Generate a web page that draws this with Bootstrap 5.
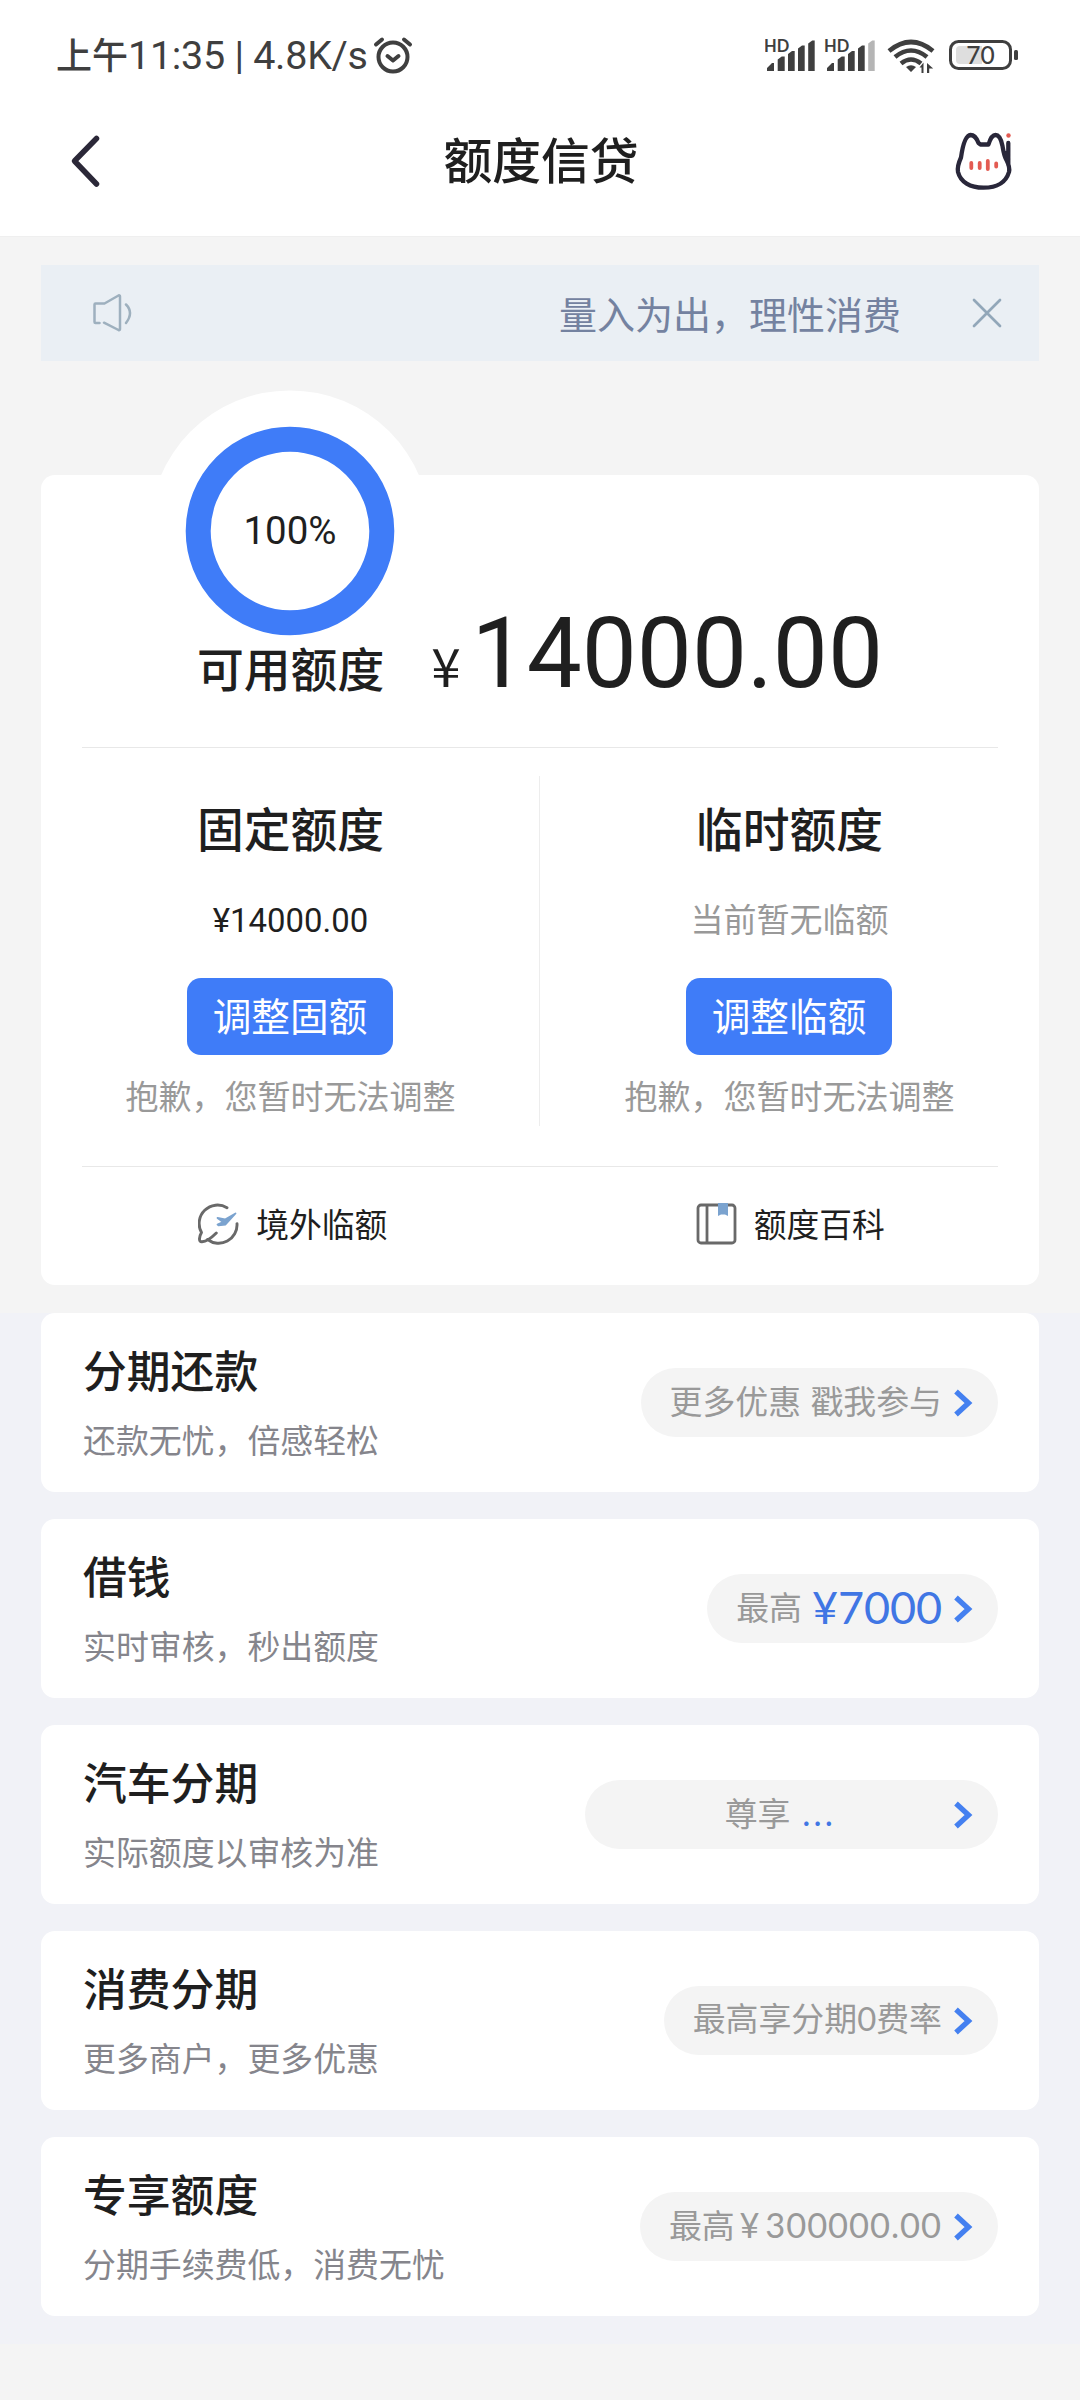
<!DOCTYPE html>
<html lang="zh-CN">
<head>
<meta charset="utf-8">
<meta name="viewport" content="width=device-width, initial-scale=1">
<title>额度信贷</title>
<link href="https://cdn.jsdelivr.net/npm/bootstrap@5.3.0/dist/css/bootstrap.min.css" rel="stylesheet">
<style>
  body{background:#f4f4f4;color:#1f1f1f;font-family:"Noto Sans CJK SC",sans-serif;line-height:1;min-height:2400px}
  svg{display:block;flex:none}
  .latin{font-family:Lato,"Noto Sans CJK SC",sans-serif}
  .statusbar{height:108px;padding:2px 61px 0 56px;color:#3f3f3f}
  .clock{font-size:36px;line-height:50px;white-space:pre;font-weight:500;margin-top:-2px}
  .clock .digits{font-family:Roboto,sans-serif;font-size:39.5px;font-weight:400;letter-spacing:-.3px}
  .clock-icon{margin-left:5px}
  .titlebar{height:129px;padding:0 66px 23px 68px;border-bottom:1px solid #efefef}
  .titlebar h1{font-size:48.8px;line-height:60px;font-weight:500;padding-bottom:5px}
  .page-pad{padding:0 41px}
  .notice{height:96px;margin-top:28px;background:#eaeff4;color:#7482a0;padding:0 37px 0 52px}
  .notice span{font-size:38px;line-height:50px;margin-right:71px;padding-bottom:1px}
  .quota{margin-top:114px;height:810px;border-radius:14px;padding:0}
  .dial{left:108px;top:-85px}
  .dial-label{left:108px;top:-85px;width:282px;height:282px;font-family:Roboto,sans-serif;font-size:38.5px}
  .total{height:272px;padding:0 0 43px 157px;position:relative;z-index:1}
  .cap{font-size:46.8px;line-height:60px;font-weight:500}
  .total .cap{margin-left:-1px}
  .yen{font-size:53px;line-height:60px;margin-left:47px}
  .amount{font-family:Roboto,sans-serif;font-size:98px;line-height:100px;margin-left:11px}
  .rule{height:1px;background:#e8e8e8;margin:0 41px}
  .halves{height:418px}
  .half{padding-top:49px}
  .half+.half{position:relative}
  .half+.half::before{content:"";position:absolute;left:-1px;top:28px;height:350px;border-left:1px solid #ededed}
  .fixed-sum{font-family:Roboto,sans-serif;font-size:32.9px;line-height:40px;margin-top:44px}
  .temp-sum,.sorry{font-size:33px;line-height:40px;color:#999}
  .temp-sum{margin-top:41px;margin-bottom:3px}
  .btn-adjust{--bs-btn-color:#fff;--bs-btn-bg:#3f7cf8;--bs-btn-border-color:#3f7cf8;--bs-btn-border-radius:14px;
    width:206px;height:77px;margin-top:37px;margin-right:1px;font-size:38.7px;line-height:48px;padding:12px 0 0;border:0;display:flex;justify-content:center}
  .sorry{margin-top:20px}
  .links{font-size:32.8px;line-height:40px;height:118px;padding:0 0 4px 3px}
  .links .item{gap:17px}
  .links .item span{margin-top:-2px}
  .products{background:#f1f2f7;margin-top:28px;padding-bottom:28px;gap:27px}
  .product{height:179px;border-radius:14px;padding:0 41px 2px 42px}
  .product h2{font-size:43.8px;line-height:50px;font-weight:500;margin:-1px 0 25px}
  .product p{font-size:32.9px;line-height:40px;color:#85858c;margin:0}
  .pill{height:69px;margin-top:2px;padding:0 25px 0 29px;background:#f4f4f4;color:#999;font-size:32.9px;line-height:40px;white-space:pre;word-spacing:2px}
  .pill>span{margin-top:-5px}
  .pill svg{margin-left:11px}
  .pill .blue{color:#4076e4}
  .pill-wide{width:413px}
  .pill-wide>span{margin-left:4px}
  .dots{letter-spacing:2px;margin-left:2px}
  .pill .sum7000{font-size:45px;margin:-3px 0 0 10px;letter-spacing:-.1px}
  .sum300k{font-size:34.5px;letter-spacing:.95px;word-spacing:-5px}
</style>
</head>
<body>
<header class="bg-white">
  <div class="statusbar d-flex align-items-center justify-content-between">
    <div class="d-flex align-items-center">
      <span class="clock">上午<span class="digits">11:35 | 4.8K/s</span></span>
      <svg class="clock-icon" width="40" height="38" viewBox="0 0 40 38" fill="none" stroke="#3f3f3f" stroke-width="4" stroke-linecap="round" stroke-linejoin="round"><circle cx="20" cy="21" r="14.5"/><path d="M14.500 20l5.500 4.500 5.500-4.500M3 8.500l6-5M37 8.500l-6-5"/></svg>
    </div>
    <div class="d-flex align-items-center">
      <svg width="254" height="40" viewBox="765 35 254 40" fill="#3f3f3f">
        <g id="bars"><text x="764" y="51.500" font-family="Lato" font-weight="700" font-size="16.500">HD</text>
        <path d="M767 71v-3l5-5h2v8zM777.700 71V59.500l4-3h3V71zM788 71V54l4-3h2.700v20zM798 71V48.500l4-3h2.700V71z"/></g>
        <path d="M808.200 71V43.500l4-3h2.500V71z"/>
        <use href="#bars" x="60"/>
        <path d="M868.200 71V43.500l4-3h2.500V71z" fill="#b5b5b5"/>
        <g fill="none" stroke="#3f3f3f" stroke-width="4.600"><path d="M889 51q22-18 44 0M895 57q16-13 32 0M901 63.500q10-8 20 0"/></g>
        <path d="M911 72l-5-5q5-3.500 10 0zM923.500 73V62.500l-4 5h2V73zM927 63v10h2.200v-4.500h4z"/>
        <rect x="950.500" y="41.500" width="60" height="27" rx="8" fill="none" stroke="#3f3f3f" stroke-width="3"/>
        <path d="M960 46h22v18h-22q-4 0-4-4V50q0-4 4-4z" fill="#dedede"/>
        <rect x="1014" y="50" width="4" height="10" rx="1.500"/>
        <text x="980.500" y="64" text-anchor="middle" font-family="Lato" font-weight="500" font-size="24.500">70</text>
      </svg>
    </div>
  </div>
  <div class="titlebar d-flex align-items-center justify-content-between">
    <svg width="60" height="54" viewBox="0 0 60 54" fill="none" stroke="#2b2838" stroke-width="5.500" stroke-linecap="round" stroke-linejoin="round"><path d="M28.500 4.500L6.500 27l22 23"/></svg>
    <h1 class="m-0">额度信贷</h1>
    <svg width="60" height="60" viewBox="954 130 60 60" fill="none" stroke="#29273a" stroke-width="4.300" stroke-linecap="round" stroke-linejoin="round"><path d="M980.500 143.500h8c1.500-5 4-9.500 7-9.500 4 0 6 6 7 11 1 6 1.500 10 4 14 2 4 3.500 8 2.500 12-3 10-12 15.700-25.500 15.700S960.500 181 958 171c-1-5 .5-9 3-14.500 1-7 3.500-22 9.500-22.500 4.500 0 6.500 4 8 8zM1008.300 142v22"/><path d="M1008 158l-2-6" /><circle cx="1008.500" cy="134.500" r="2.200" fill="#e35b52" stroke="none"/><path d="M971.300 162v5M979.700 162v5M987.800 160v8M996.200 162.500v3" stroke="#e35b52" stroke-width="3.800"/></svg>
  </div>
</header>

<main>
  <div class="page-pad">
    <div class="notice d-flex align-items-center">
      <svg width="40" height="38" viewBox="0 0 40 38" fill="none" stroke="#9eb0be" stroke-width="2.500" stroke-linecap="round" stroke-linejoin="round"><path d="M6.500 29H2.500q-1 0-1-1V10.500q0-1 1-1h9L25.500 1.500q1.500-.5 1.500 1v32.500q0 1.500-1.500 1L11 28.700M33 10.500q8 8 0 18.500"/></svg>
      <span class="ms-auto">量入为出，理性消费</span>
      <svg width="30" height="30" viewBox="0 0 30 30" stroke="#92a7b9" stroke-width="2.700" stroke-linecap="round"><path d="M2 2l26 26M28 2L2 28"/></svg>
    </div>

    <section class="quota bg-white position-relative">
      <svg class="dial position-absolute" width="282" height="282" viewBox="0 0 282 282"><circle cx="141" cy="141" r="140.600" fill="#fff"/><circle cx="141" cy="141" r="91.800" fill="none" stroke="#3f7cf8" stroke-width="25"/></svg>
      <div class="dial-label position-absolute d-flex align-items-center justify-content-center">100%</div>
      <div class="total d-flex align-items-end">
        <div class="d-flex align-items-baseline"><span class="cap">可用额度</span><span class="yen">¥</span><span class="amount">14000.00</span></div>
      </div>
      <div class="rule"></div>
      <div class="halves row g-0">
        <div class="half col-6 d-flex flex-column align-items-center">
          <div class="cap">固定额度</div>
          <div class="fixed-sum">¥14000.00</div>
          <button class="btn btn-adjust">调整固额</button>
          <div class="sorry">抱歉，您暂时无法调整</div>
        </div>
        <div class="half col-6 d-flex flex-column align-items-center">
          <div class="cap">临时额度</div>
          <div class="temp-sum">当前暂无临额</div>
          <button class="btn btn-adjust">调整临额</button>
          <div class="sorry">抱歉，您暂时无法调整</div>
        </div>
      </div>
      <div class="rule"></div>
      <div class="links row g-0 align-items-center">
        <div class="item col-6 d-flex align-items-center justify-content-center">
          <svg width="41" height="42" viewBox="0 0 41 42" fill="none" stroke="#696969" stroke-width="2.900" stroke-linecap="round" stroke-linejoin="round"><path d="M29 4.700A18.400 18.400 0 0 0 3.500 29.500C1.500 33 0 39 4 38.800c5-.3 9.500-4 14.300-8.800M9.500 36.500A18.400 18.400 0 0 0 39 20.700"/><path d="M37.500 10.500L27 16.500l-7.500-1.500 5.500 4-5.500 2.500 1 .8 7-.8z" fill="#7ba3cf" stroke="#7ba3cf" stroke-width="1.800"/></svg>
          <span>境外临额</span>
        </div>
        <div class="item col-6 d-flex align-items-center justify-content-center">
          <svg width="41" height="42" viewBox="0 0 41 42" fill="none" stroke="#696969" stroke-width="2.800"><rect x="2" y="2" width="37" height="38" rx="3"/><path d="M11 2v38"/><path d="M22 0h10v13l-3-1.500h-4L22 13z" fill="#7ba3cf" stroke="none"/></svg>
          <span>额度百科</span>
        </div>
      </div>
    </section>
  </div>

  <section class="products page-pad d-flex flex-column">
    <article class="product bg-white d-flex align-items-center justify-content-between">
      <div><h2>分期还款</h2><p>还款无忧，倍感轻松</p></div>
      <div class="pill rounded-pill d-flex align-items-center"><span>更多优惠 戳我参与</span><svg width="20" height="28" viewBox="0 0 20 28" fill="none" stroke="#4480f0" stroke-width="5.300"><path d="M3 2.500L15.500 14 3 25.500"/></svg></div>
    </article>
    <article class="product bg-white d-flex align-items-center justify-content-between">
      <div><h2>借钱</h2><p>实时审核，秒出额度</p></div>
      <div class="pill rounded-pill d-flex align-items-center"><span>最高</span><span class="blue sum7000 latin">¥7000</span><svg width="20" height="28" viewBox="0 0 20 28" fill="none" stroke="#4480f0" stroke-width="5.300"><path d="M3 2.500L15.500 14 3 25.500"/></svg></div>
    </article>
    <article class="product bg-white d-flex align-items-center justify-content-between">
      <div><h2>汽车分期</h2><p>实际额度以审核为准</p></div>
      <div class="pill pill-wide rounded-pill d-flex align-items-center"><span class="flex-fill text-center">尊享 <span class="blue dots">...</span></span><svg width="20" height="28" viewBox="0 0 20 28" fill="none" stroke="#4480f0" stroke-width="5.300"><path d="M3 2.500L15.500 14 3 25.500"/></svg></div>
    </article>
    <article class="product bg-white d-flex align-items-center justify-content-between">
      <div><h2>消费分期</h2><p>更多商户，更多优惠</p></div>
      <div class="pill rounded-pill d-flex align-items-center"><span>最高享分期<span class="latin">0</span>费率</span><svg width="20" height="28" viewBox="0 0 20 28" fill="none" stroke="#4480f0" stroke-width="5.300"><path d="M3 2.500L15.500 14 3 25.500"/></svg></div>
    </article>
    <article class="product bg-white d-flex align-items-center justify-content-between">
      <div><h2>专享额度</h2><p>分期手续费低，消费无忧</p></div>
      <div class="pill rounded-pill d-flex align-items-center"><span>最高<span class="latin sum300k"> ¥ 300000.00</span></span><svg width="20" height="28" viewBox="0 0 20 28" fill="none" stroke="#4480f0" stroke-width="5.300"><path d="M3 2.500L15.500 14 3 25.500"/></svg></div>
    </article>
  </section>
</main>
<script src="https://cdn.jsdelivr.net/npm/bootstrap@5.3.0/dist/js/bootstrap.bundle.min.js"></script>
</body>
</html>
